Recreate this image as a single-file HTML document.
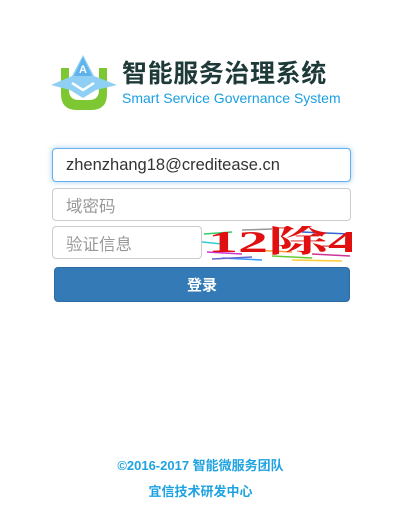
<!DOCTYPE html>
<html><head><meta charset="utf-8"><style>
*{margin:0;padding:0;box-sizing:border-box}
body{width:401px;height:512px;background:#fff;position:relative;font-family:"Liberation Sans","Noto Sans CJK SC",sans-serif;overflow:hidden}
.abs{position:absolute}
.title{left:122px;top:54px;font-size:25px;font-weight:bold;color:#1e3a38;letter-spacing:0.6px;white-space:nowrap}
.sub{left:122px;top:90px;font-size:14px;color:#1a9fe0;white-space:nowrap}
.inp{border:1px solid #ccc;border-radius:4px;font-size:16.5px;color:#999;padding-left:13px;display:flex;align-items:center;background:#fff}
.btn{left:54px;top:267px;width:296px;height:35px;background:#337ab7;border:1px solid #2e6da4;border-radius:4px;color:#fff;font-size:15px;font-weight:bold;display:flex;align-items:center;justify-content:center}
.ft{left:0;width:401px;text-align:center;font-size:13px;font-weight:bold;color:#1fa3e0}
</style></head><body>
<svg class="abs" style="left:50px;top:52px" width="68" height="60" viewBox="0 0 68 60">
<path d="M11 16 h8 v22 q0 10 10 10 h10 q10 0 10-10 v-22 h8 v26 q0 16-16 16 h-14 q-16 0-16-16z" fill="#7dc832"/>
<path d="M33 3 L44 24 L67 33 L46 38 L33 46 L20 38 L1 33 L22 24 Z" fill="#8ecff3"/>
<path d="M33 5 L42 24 L24 24 Z" fill="#5fb3ea"/>
<text x="33" y="21" font-size="11" font-weight="bold" fill="#fff" text-anchor="middle" font-family="Liberation Sans">A</text>
<path d="M22 31 L33 38 L44 31" stroke="#fff" stroke-width="2.5" fill="none"/>
</svg>
<div class="abs title">智能服务治理系统</div>
<div class="abs sub">Smart Service Governance System</div>
<div class="abs inp" style="left:52px;top:148px;width:299px;height:34px;border-color:#66afe9;box-shadow:0 0 6px rgba(102,175,233,.6);color:#333">zhenzhang18@creditease.cn</div>
<div class="abs inp" style="left:52px;top:188px;width:299px;height:33px">域密码</div>
<div class="abs inp" style="left:52px;top:226px;width:150px;height:33px">验证信息</div>
<svg class="abs" style="left:202px;top:226px" width="150" height="36">
<g stroke-width="1.5">
<line x1="2" y1="8" x2="30" y2="6" stroke="#3c6"/><line x1="5" y1="26" x2="40" y2="28" stroke="#c3c"/>
<line x1="20" y1="32" x2="60" y2="34" stroke="#39f"/><line x1="50" y1="24" x2="90" y2="26" stroke="#f93"/>
<line x1="70" y1="30" x2="110" y2="32" stroke="#6c3"/><line x1="100" y1="6" x2="148" y2="8" stroke="#36c"/>
<line x1="110" y1="28" x2="148" y2="30" stroke="#c39"/><line x1="0" y1="16" x2="20" y2="18" stroke="#3cc"/>
<line x1="40" y1="4" x2="70" y2="3" stroke="#999"/><line x1="90" y1="34" x2="140" y2="35" stroke="#fc3"/>
<line x1="10" y1="33" x2="50" y2="31" stroke="#66c"/><line x1="120" y1="20" x2="150" y2="21" stroke="#c66"/>
</g>
<text x="6" y="26" font-size="31" font-weight="bold" fill="#e01010" font-family="Liberation Serif,Noto Serif CJK SC,serif" textLength="150" lengthAdjust="spacingAndGlyphs">12除4</text>
</svg>
<div class="abs btn">登录</div>
<div class="abs ft" style="top:455px">©2016-2017 智能微服务团队</div>
<div class="abs ft" style="top:481px">宜信技术研发中心</div>
</body></html>
